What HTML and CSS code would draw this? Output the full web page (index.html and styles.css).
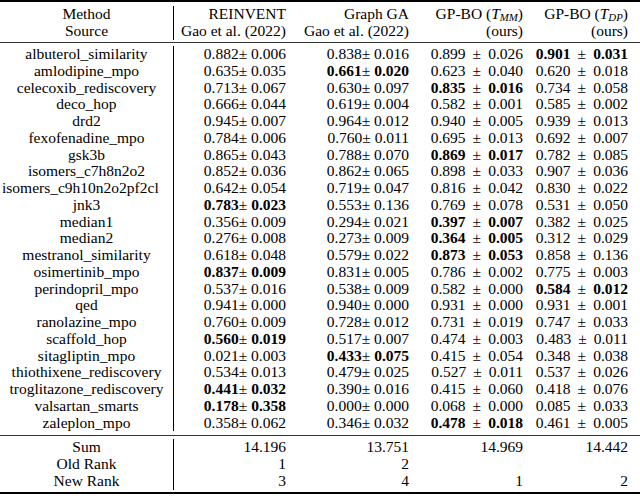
FILE: index.html
```html
<!DOCTYPE html>
<html>
<head>
<meta charset="utf-8">
<link rel="stylesheet" href="styles.css">
</head>
<body>
<div class="table">
  <div class="rule thick"></div>
  <div class="section head">
    <div>Method</div><div>REINVENT</div><div>Graph GA</div><div>GP-BO (<i>T</i><sub>MM</sub>)</div><div>GP-BO (<i>T</i><sub>DP</sub>)</div>
    <div>Source</div><div>Gao et al. (2022)</div><div>Gao et al. (2022)</div><div>(ours)</div><div>(ours)</div>
  </div>
  <div class="rule thin"></div>
  <div class="section body">
    <div>albuterol_similarity</div><div>0.882± 0.006</div><div>0.838± 0.016</div><div>0.899<span class="pm">±</span>0.026</div><div><b>0.901</b><span class="pm">±</span><b>0.031</b></div>
    <div>amlodipine_mpo</div><div>0.635± 0.035</div><div><b>0.661</b>± <b>0.020</b></div><div>0.623<span class="pm">±</span>0.040</div><div>0.620<span class="pm">±</span>0.018</div>
    <div>celecoxib_rediscovery</div><div>0.713± 0.067</div><div>0.630± 0.097</div><div><b>0.835</b><span class="pm">±</span><b>0.016</b></div><div>0.734<span class="pm">±</span>0.058</div>
    <div>deco_hop</div><div>0.666± 0.044</div><div>0.619± 0.004</div><div>0.582<span class="pm">±</span>0.001</div><div>0.585<span class="pm">±</span>0.002</div>
    <div>drd2</div><div>0.945± 0.007</div><div>0.964± 0.012</div><div>0.940<span class="pm">±</span>0.005</div><div>0.939<span class="pm">±</span>0.013</div>
    <div>fexofenadine_mpo</div><div>0.784± 0.006</div><div>0.760± 0.011</div><div>0.695<span class="pm">±</span>0.013</div><div>0.692<span class="pm">±</span>0.007</div>
    <div>gsk3b</div><div>0.865± 0.043</div><div>0.788± 0.070</div><div><b>0.869</b><span class="pm">±</span><b>0.017</b></div><div>0.782<span class="pm">±</span>0.085</div>
    <div>isomers_c7h8n2o2</div><div>0.852± 0.036</div><div>0.862± 0.065</div><div>0.898<span class="pm">±</span>0.033</div><div>0.907<span class="pm">±</span>0.036</div>
    <div class="wide">isomers_c9h10n2o2pf2cl</div><div>0.642± 0.054</div><div>0.719± 0.047</div><div>0.816<span class="pm">±</span>0.042</div><div>0.830<span class="pm">±</span>0.022</div>
    <div>jnk3</div><div><b>0.783</b>± <b>0.023</b></div><div>0.553± 0.136</div><div>0.769<span class="pm">±</span>0.078</div><div>0.531<span class="pm">±</span>0.050</div>
    <div>median1</div><div>0.356± 0.009</div><div>0.294± 0.021</div><div><b>0.397</b><span class="pm">±</span><b>0.007</b></div><div>0.382<span class="pm">±</span>0.025</div>
    <div>median2</div><div>0.276± 0.008</div><div>0.273± 0.009</div><div><b>0.364</b><span class="pm">±</span><b>0.005</b></div><div>0.312<span class="pm">±</span>0.029</div>
    <div>mestranol_similarity</div><div>0.618± 0.048</div><div>0.579± 0.022</div><div><b>0.873</b><span class="pm">±</span><b>0.053</b></div><div>0.858<span class="pm">±</span>0.136</div>
    <div>osimertinib_mpo</div><div><b>0.837</b>± <b>0.009</b></div><div>0.831± 0.005</div><div>0.786<span class="pm">±</span>0.002</div><div>0.775<span class="pm">±</span>0.003</div>
    <div>perindopril_mpo</div><div>0.537± 0.016</div><div>0.538± 0.009</div><div>0.582<span class="pm">±</span>0.000</div><div><b>0.584</b><span class="pm">±</span><b>0.012</b></div>
    <div>qed</div><div>0.941± 0.000</div><div>0.940± 0.000</div><div>0.931<span class="pm">±</span>0.000</div><div>0.931<span class="pm">±</span>0.001</div>
    <div>ranolazine_mpo</div><div>0.760± 0.009</div><div>0.728± 0.012</div><div>0.731<span class="pm">±</span>0.019</div><div>0.747<span class="pm">±</span>0.033</div>
    <div>scaffold_hop</div><div><b>0.560</b>± <b>0.019</b></div><div>0.517± 0.007</div><div>0.474<span class="pm">±</span>0.003</div><div>0.483<span class="pm">±</span>0.011</div>
    <div>sitagliptin_mpo</div><div>0.021± 0.003</div><div><b>0.433</b>± <b>0.075</b></div><div>0.415<span class="pm">±</span>0.054</div><div>0.348<span class="pm">±</span>0.038</div>
    <div>thiothixene_rediscovery</div><div>0.534± 0.013</div><div>0.479± 0.025</div><div>0.527<span class="pm">±</span>0.011</div><div>0.537<span class="pm">±</span>0.026</div>
    <div>troglitazone_rediscovery</div><div><b>0.441</b>± <b>0.032</b></div><div>0.390± 0.016</div><div>0.415<span class="pm">±</span>0.060</div><div>0.418<span class="pm">±</span>0.076</div>
    <div>valsartan_smarts</div><div><b>0.178</b>± <b>0.358</b></div><div>0.000± 0.000</div><div>0.068<span class="pm">±</span>0.000</div><div>0.085<span class="pm">±</span>0.033</div>
    <div>zaleplon_mpo</div><div>0.358± 0.062</div><div>0.346± 0.032</div><div><b>0.478</b><span class="pm">±</span><b>0.018</b></div><div>0.461<span class="pm">±</span>0.005</div>
  </div>
  <div class="rule thin"></div>
  <div class="section foot">
    <div>Sum</div><div>14.196</div><div>13.751</div><div>14.969</div><div>14.442</div>
    <div>Old Rank</div><div>1</div><div>2</div><div></div><div></div>
    <div>New Rank</div><div>3</div><div>4</div><div>1</div><div>2</div>
  </div>
  <div class="rule thick"></div>
</div>
</body>
</html>
```

FILE: styles.css
```css
html, body {
  margin: 0;
  background: #fff;
}
body {
  font-family: "Liberation Serif", "Times New Roman", serif;
  font-size: 15.5px;
  color: #000;
}
.table {
  width: 640px;
}
.rule {
  background: #000;
}
.rule.thick {
  height: 2px;
}
.rule.thin {
  height: 1px;
  background: #333;
}
.section {
  display: grid;
  grid-template-columns: 174px 118px 123px 114px 111px;
  grid-auto-rows: 16.75px;
  line-height: 16.75px;
}
.section > div {
  white-space: nowrap;
  text-align: right;
  padding-right: 6px;
}
.section > div:nth-child(5n+1) {
  text-align: center;
  padding-right: 0;
  border-right: 1px solid #000;
}
.section > div.wide {
  text-align: left;
  padding-left: 2px;
}
.section > div:nth-child(5n) {
  padding-right: 12px;
}
.head {
  padding: 4px 0 2.5px;
}
.body {
  padding: 3px 0 3.5px;
}
.foot {
  padding: 3.6px 0 2.4px;
}
sub {
  font-style: italic;
  font-size: 0.7em;
  line-height: 0;
  vertical-align: -0.22em;
}
.pm {
  margin: 0 7px;
}
b {
  font-weight: bold;
}
```
